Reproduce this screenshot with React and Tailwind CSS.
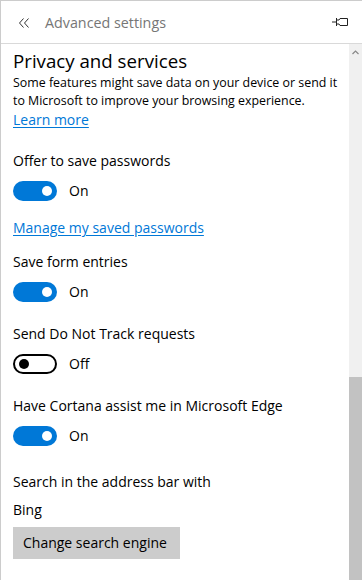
import React from "react";

function Toggle({ on }) {
  return (
    <div className="flex items-center h-[20px]">
      {on ? (
        <div className="w-[44px] h-[20px] rounded-full bg-[#0078d7] flex items-center justify-end pr-[5px]">
          <div className="w-[10px] h-[10px] rounded-full bg-white" />
        </div>
      ) : (
        <div className="w-[44px] h-[20px] rounded-full border-2 border-black flex items-center pl-[4px]">
          <div className="w-[10px] h-[10px] rounded-full bg-black" />
        </div>
      )}
      <span className="ml-[12px] text-[14px] leading-[20px]">{on ? "On" : "Off"}</span>
    </div>
  );
}

function Label({ children, className = "" }) {
  return <div className={"text-[14px] leading-[20px] " + className}>{children}</div>;
}

export default function App() {
  return (
    <div
      className="w-[362px] h-[580px] bg-white text-black border-l border-t border-[#cccccc] flex flex-col overflow-hidden"
      style={{ fontFamily: "'Open Sans', 'Noto Sans', sans-serif" }}
    >
      <div className="h-[43px] shrink-0 border-b border-[#d9d9d9] flex items-center">
        <svg width="12" height="12" viewBox="0 0 12 12" className="ml-[17px] mt-[1px]" fill="none" stroke="#333" strokeWidth="1">
          <polyline points="5.5,1.5 1.5,6 5.5,10.5" />
          <polyline points="10.5,1.5 6.5,6 10.5,10.5" />
        </svg>
        <span className="ml-[15px] mt-[1px] text-[14.3px] text-[#767676]">Advanced settings</span>
        <svg width="17" height="10" viewBox="0 0 17 10" className="ml-auto mr-[13px]" fill="none" stroke="#222" strokeWidth="1">
          <line x1="0" y1="5" x2="4" y2="5" />
          <line x1="4.5" y1="1" x2="4.5" y2="9" />
          <path d="M4.5 3 H7 L8 1.5 H15.5 V8.5 H8 L7 7 H4.5" />
        </svg>
      </div>
      <div className="flex flex-1 min-h-0">
        <div className="flex-1 pl-[12px] pr-[8px] flex flex-col">
          <div className="mt-[4px] text-[18.7px] leading-[26px]">Privacy and services</div>
          <div className="text-[12.4px] leading-[18px]">
            Some features might save data on your device or send it to Microsoft to improve your browsing experience.
          </div>
          <Label className="text-[#0078d7] underline underline-offset-2">Learn more</Label>

          <Label className="mt-[21px]">Offer to save passwords</Label>
          <div className="mt-[10px]"><Toggle on /></div>
          <Label className="mt-[17px] text-[#0078d7] underline underline-offset-2">Manage my saved passwords</Label>

          <Label className="mt-[14px]">Save form entries</Label>
          <div className="mt-[10px]"><Toggle on /></div>

          <Label className="mt-[22px]">Send Do Not Track requests</Label>
          <div className="mt-[10px]"><Toggle on={false} /></div>

          <Label className="mt-[22px]">Have Cortana assist me in Microsoft Edge</Label>
          <div className="mt-[10px]"><Toggle on /></div>

          <Label className="mt-[26px]">Search in the address bar with</Label>
          <Label className="mt-[8px]">Bing</Label>
          <div className="mt-[7px]">
            <button className="h-[32px] w-[167px] pl-[10px] text-left bg-[#cccccc] text-[14px] leading-[20px]">Change search engine</button>
          </div>
        </div>
        <div className="w-[13px] shrink-0 bg-[#f0f0f0] flex flex-col">
          <div className="h-[16px] flex items-center justify-center">
            <svg width="7" height="5" viewBox="0 0 7 5" fill="none" stroke="#888" strokeWidth="1.2">
              <polyline points="0.5,4 3.5,1 6.5,4" />
            </svg>
          </div>
          <div className="flex-1" />
          <div className="h-[203px] bg-[#c2c2c2]" />
        </div>
      </div>
    </div>
  );
}
